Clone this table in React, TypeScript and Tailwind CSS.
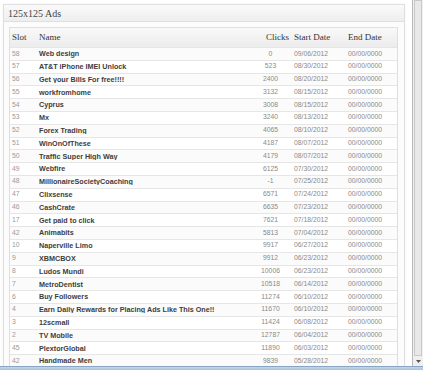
const rows: [string, string, string, string][] = [
  ["58", "Web design", "0", "09/06/2012"],
  ["57", "AT&T iPhone IMEI Unlock", "523", "08/30/2012"],
  ["56", "Get your Bills For free!!!!", "2400", "08/20/2012"],
  ["55", "workfromhome", "3132", "08/15/2012"],
  ["54", "Cyprus", "3008", "08/15/2012"],
  ["53", "Mx", "3240", "08/13/2012"],
  ["52", "Forex Trading", "4065", "08/10/2012"],
  ["51", "WinOnOfThese", "4187", "08/07/2012"],
  ["50", "Traffic Super High Way", "4179", "08/07/2012"],
  ["49", "Webfire", "6125", "07/30/2012"],
  ["48", "MillionaireSocietyCoaching", "-1", "07/25/2012"],
  ["47", "Clixsense", "6571", "07/24/2012"],
  ["46", "CashCrate", "6635", "07/23/2012"],
  ["17", "Get paid to click", "7621", "07/18/2012"],
  ["42", "Animabits", "5813", "07/04/2012"],
  ["10", "Naperville Limo", "9917", "06/27/2012"],
  ["9", "XBMCBOX", "9912", "06/23/2012"],
  ["8", "Ludos Mundi", "10006", "06/23/2012"],
  ["7", "MetroDentist", "10518", "06/14/2012"],
  ["6", "Buy Followers", "11274", "06/10/2012"],
  ["4", "Earn Daily Rewards for Placing Ads Like This One!!", "11670", "06/10/2012"],
  ["3", "12scmall", "11424", "06/08/2012"],
  ["2", "TV Mobile", "12787", "06/04/2012"],
  ["45", "PlextorGlobal", "11890", "06/03/2012"],
  ["42", "Handmade Men", "9839", "05/28/2012"],
];

const cols = "grid grid-cols-[27px_217px_38px_54px_52px]";

export default function App() {
  return (
    <div className="flex h-[370px] w-[423px] flex-col overflow-hidden bg-white font-['Liberation_Sans',Arial,sans-serif]">
      <div className="flex min-h-0 flex-1">
        {/* page */}
        <div className="min-w-0 flex-1 pl-[3px] pt-[4px] pr-[2px]">
          <div className="h-full w-[402px] border border-b-0 border-[#dfdfdf] bg-[#fcfcfc] shadow-[0_0_2px_rgba(0,0,0,0.06)]">
            <div className="flex h-[17px] items-center border-b border-[#dfdfdf] bg-gradient-to-b from-[#fafafa] to-[#eeeeee] pl-[4px] font-['Liberation_Serif',Georgia,serif] text-[10px] text-[#464646]">
              125x125 Ads
            </div>
            <div className="pl-[5px] pt-[5px]">
              <div className="w-[389px] border border-b-0 border-[#dfdfdf] bg-white">
                <div className={`${cols} h-[19px] items-center bg-gradient-to-b from-[#f9f9f9] to-[#ececec] font-['Liberation_Serif',Georgia,serif] text-[9px] text-[#333]`}>
                  <div className="pl-[2px]">Slot</div>
                  <div className="pl-[2px]">Name</div>
                  <div className="pl-[9px] text-center">Clicks</div>
                  <div className="pl-[2px]">Start Date</div>
                  <div className="pl-[2px]">End Date</div>
                </div>
                {rows.map(([slot, name, clicks, start], i) => (
                  <div
                    key={i}
                    className={`${cols} h-[12.8px] items-center border-t border-[#e6e6e6] text-[6.8px] leading-none ${i % 2 ? "bg-white" : "bg-[#fbfbfb]"}`}
                  >
                    <div className="pl-[2px] text-[#9a9a9a]">{slot}</div>
                    <div className="truncate pl-[2px] text-[7.2px] font-bold text-[#3d3d3d]">{name}</div>
                    <div className="pr-[5px] text-center text-[#8a8a8a]">{clicks}</div>
                    <div className="pl-[2px] text-[#8a8a8a]">{start}</div>
                    <div className="pl-[2px] text-[#8a8a8a]">00/00/0000</div>
                  </div>
                ))}
                <div className="h-[12.8px] border-t border-[#e6e6e6] bg-[#fbfbfb]" />
              </div>
            </div>
          </div>
        </div>
        {/* scrollbar */}
        <div className="flex w-[11px] flex-col border-l border-[#b9b9b9] bg-[#f0f0f0]">
          <div className="mx-[1px] flex-1 border border-[#c9c9c9] bg-[#e8e8e8]" />
          <div className="flex h-[10px] items-center justify-center">
            <svg width="5" height="3" viewBox="0 0 5 3">
              <path d="M0 0h5L2.5 3z" fill="#555" />
            </svg>
          </div>
        </div>
      </div>
      <div className="h-[4px] border-t border-[#8aa6c6] bg-gradient-to-b from-[#c2d6ec] to-[#a8c2de]" />
    </div>
  );
}
